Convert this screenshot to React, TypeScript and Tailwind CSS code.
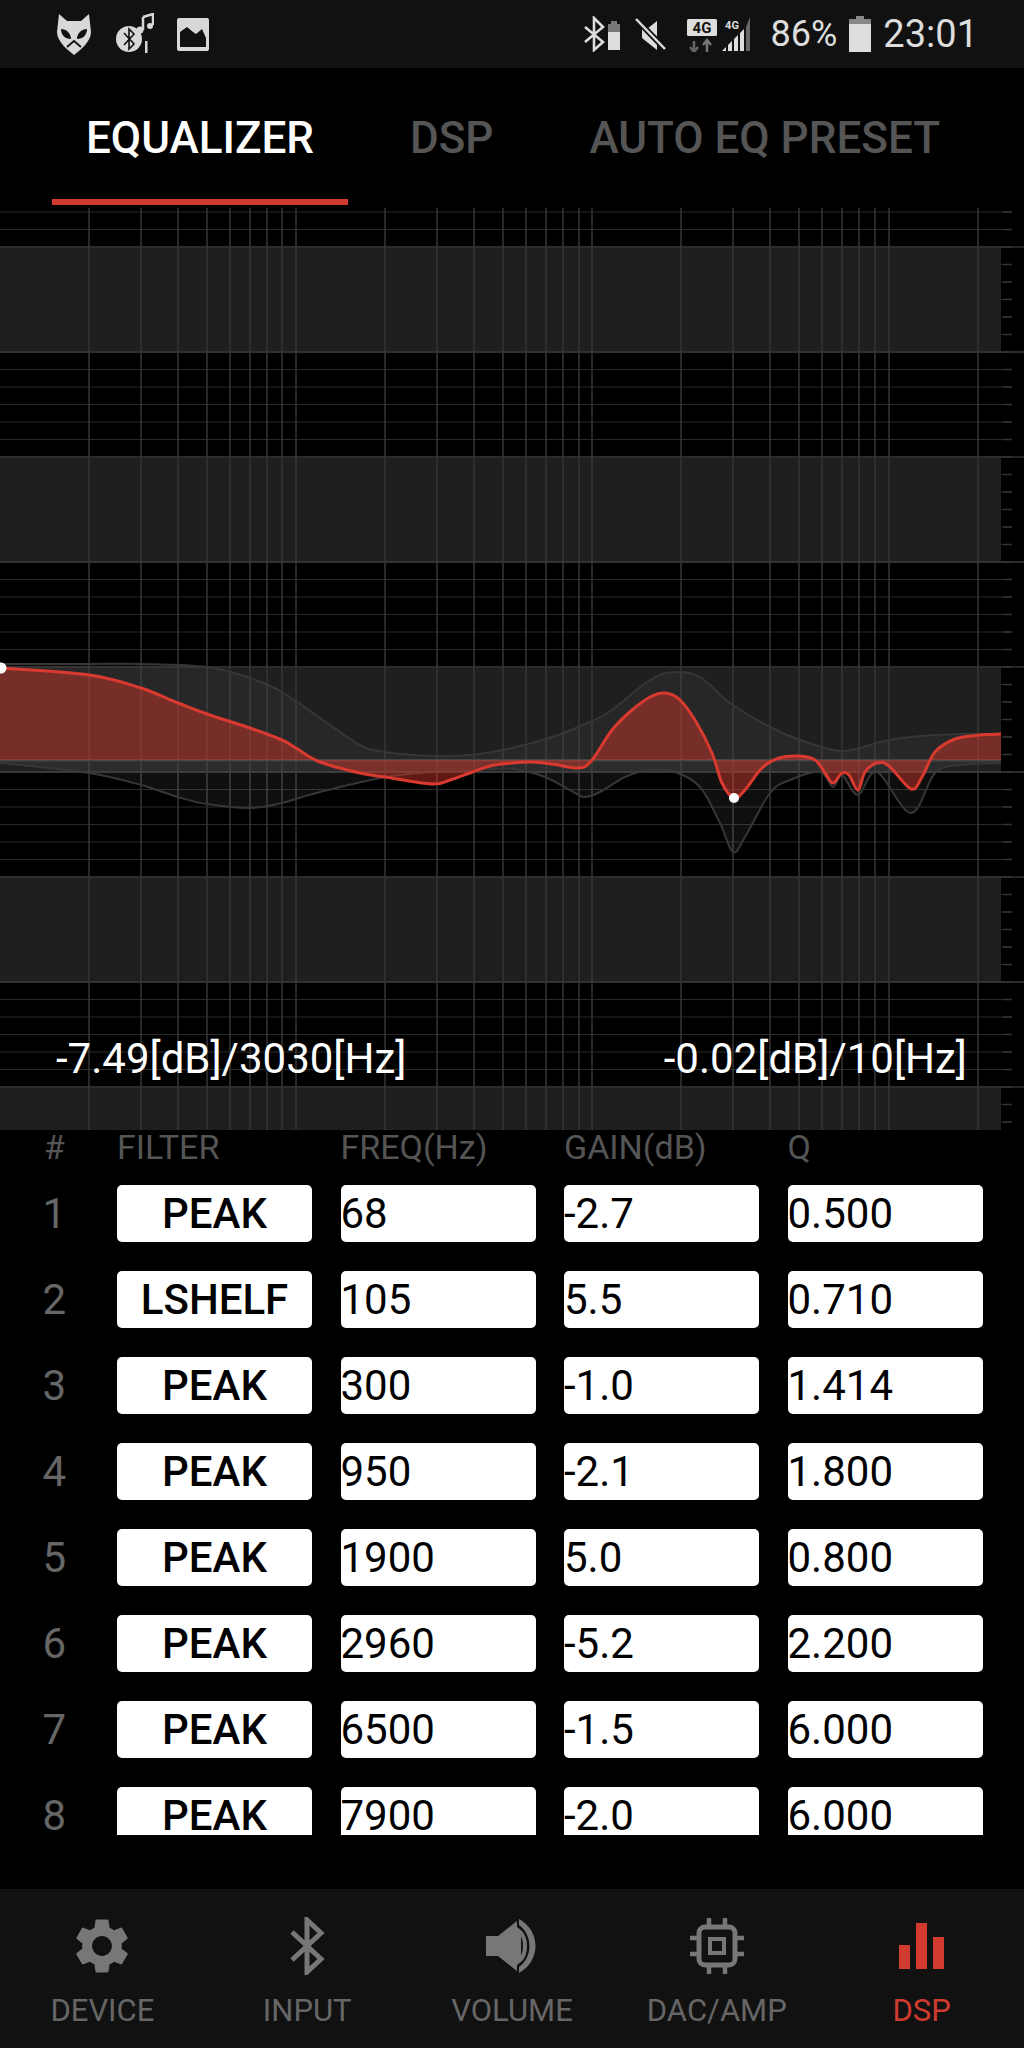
import { MdSettings } from "react-icons/md";

// curve points read off the reference, in page coordinates minus the chart's top (205)
const RED: number[][] = [
  [0, 668], [89, 675], [141, 688], [178, 703], [207, 714], [250, 728], [282, 740], [296, 748], [320, 762], [360, 773],
  [385, 777], [432, 784], [450, 780], [470, 773], [490, 766], [512, 763], [532, 762], [552, 764], [579, 768], [592, 760],
  [612, 730], [632, 710], [652, 696], [665, 693], [679, 699], [695, 720], [712, 753], [722, 783], [734, 798], [745, 790],
  [762, 768], [779, 758], [799, 756], [815, 760], [825, 773], [833, 783], [842, 773], [849, 775], [858, 790], [865, 772],
  [877, 763], [889, 766], [911, 789], [922, 777], [935, 752], [955, 739], [979, 735], [1001, 734],
];
const UPPER: number[][] = [
  [0, 664], [89, 664], [141, 664], [207, 667], [250, 678], [282, 692], [320, 718], [360, 745], [385, 752], [432, 756],
  [470, 755], [512, 748], [552, 737], [590, 722], [612, 710], [650, 680], [675, 672], [700, 677], [730, 703], [770, 727],
  [800, 740], [842, 751], [880, 742], [910, 737], [960, 734], [1001, 734],
];
const LOWER: number[][] = [
  [0, 763], [89, 773], [141, 785], [178, 797], [207, 804], [250, 808], [282, 803], [320, 792], [385, 777], [432, 772],
  [470, 770], [512, 769], [545, 777], [575, 793], [585, 797], [600, 792], [625, 777], [650, 770], [675, 772], [700, 787],
  [720, 823], [733, 852], [745, 837], [770, 793], [790, 780], [820, 772], [833, 787], [842, 775], [858, 795], [877, 772],
  [911, 813], [935, 773], [960, 765], [1001, 763],
];

const V_LINES = [
  89, 141, 178, 207, 230, 250, 267, 282, 296, 385, 437, 474, 503, 526, 546, 563, 579, 592, 681, 733, 770, 799, 822, 842,
  859, 875, 889, 978,
];

const TOP = 205;
const BASE = 760;
const BANDS = [247, 457, 667, 877, 1087];

function smooth(points: number[][]) {
  const p = points.map(([x, y]) => [x, y - TOP]);
  let d = `M${p[0][0]},${p[0][1]}`;
  for (let i = 0; i < p.length - 1; i++) {
    const a = p[Math.max(i - 1, 0)];
    const b = p[i];
    const c = p[i + 1];
    const e = p[Math.min(i + 2, p.length - 1)];
    const c1 = [b[0] + (c[0] - a[0]) / 6, b[1] + (c[1] - a[1]) / 6];
    const c2 = [c[0] - (e[0] - b[0]) / 6, c[1] - (e[1] - b[1]) / 6];
    d += ` C${c1[0].toFixed(1)},${c1[1].toFixed(1)} ${c2[0].toFixed(1)},${c2[1].toFixed(1)} ${c[0]},${c[1]}`;
  }
  return d;
}

function area(points: number[][]) {
  const base = BASE - TOP;
  return `${smooth(points)} L1001,${base} L0,${base} Z`;
}

function EqChart() {
  const hLines: number[] = [];
  for (let y = 212; y < 1130; y += 17.5) hLines.push(y - TOP);

  return (
    <svg width="1024" height="925" viewBox="0 0 1024 925" className="block">
      {hLines.map((y) => (
        <line key={y} x1="0" x2="1012" y1={y} y2={y} stroke="#2a2a2a" strokeWidth="1" />
      ))}
      {BANDS.map((y) => (
        <g key={y}>
          <rect x="0" y={y - TOP} width="1001" height={Math.min(105, 1130 - y)} fill="#1f1f1f" />
          <line x1="0" x2="1024" y1={y - TOP} y2={y - TOP} stroke="#333" strokeWidth="1.5" />
          {y + 105 < 1130 && <line x1="0" x2="1024" y1={y + 105 - TOP} y2={y + 105 - TOP} stroke="#3a3a3a" strokeWidth="1.5" />}
        </g>
      ))}
      {hLines.map((y) => (
        <line key={`t${y}`} x1="1003" x2="1012" y1={y} y2={y} stroke="#333" strokeWidth="1.5" />
      ))}
      {V_LINES.map((x) => (
        <line key={x} x1={x} x2={x} y1="3" y2="925" stroke="#363636" strokeWidth="1.5" />
      ))}

      <path d={area(UPPER)} fill="#ffffff" fillOpacity="0.04" />
      <path d={area(LOWER)} fill="#ffffff" fillOpacity="0.06" />
      <path d={smooth(UPPER)} fill="none" stroke="#363636" strokeWidth="2" />
      <path d={smooth(LOWER)} fill="none" stroke="#363636" strokeWidth="2" />
      <rect x="0" y={BASE - TOP - 1} width="1001" height="2.5" fill="#4a4444" />
      <rect x="0" y={BASE - TOP + 11} width="1001" height="1.5" fill="#3c3c3c" />
      <path d={area(RED)} fill="#d9382c" fillOpacity="0.45" />
      <path d={smooth(RED)} fill="none" stroke="#d93a30" strokeWidth="3" />
      <circle cx="1" cy={668 - TOP} r="5.5" fill="#fff" />
      <circle cx="734" cy={798 - TOP} r="5" fill="#fff" />
    </svg>
  );
}

function FoxIcon() {
  return (
    <svg width="36" height="44" viewBox="0 0 36 44">
      <path d="M3 2 L11 9 H25 L33 2 L35 20 C35 30 24 38 18 43 C12 38 1 30 1 20 Z" fill="#d8d8d8" />
      <path d="M5 17 C10 17 15 21 15 27 C9 27 5 23 5 17 Z M31 17 C26 17 21 21 21 27 C27 27 31 23 31 17 Z" fill="#111" />
      <path d="M11 35 L18 29 L25 35" fill="none" stroke="#111" strokeWidth="1.8" />
    </svg>
  );
}

function BtNoteIcon() {
  return (
    <svg width="38" height="42" viewBox="0 0 38 42">
      <circle cx="13" cy="26" r="13" fill="#d8d8d8" />
      <path d="M8 20 L18 31 L13 36 V16 L18 21 L8 32" fill="none" stroke="#111" strokeWidth="1.6" />
      <path d="M27 4 L37 1 V12 M27 4 V17" fill="none" stroke="#d8d8d8" strokeWidth="2.5" />
      <circle cx="24" cy="17" r="3.5" fill="#d8d8d8" />
      <circle cx="34" cy="13" r="3" fill="#d8d8d8" />
      <rect x="29" y="28" width="2.5" height="12" fill="#d8d8d8" />
    </svg>
  );
}

function PictureIcon() {
  return (
    <svg width="32" height="33" viewBox="0 0 32 33">
      <rect width="32" height="33" rx="2" fill="#d8d8d8" />
      <path d="M3 29 V14 L10 9 L16 14 L19 16 L25 11 L29 20 V29 Z" fill="#111" />
    </svg>
  );
}

function StatusRight() {
  return (
    <svg width="186" height="36" viewBox="0 0 186 36" className="shrink-0">
      <path d="M2 11 L20 26 L11 34 V2 L20 11 L2 26" fill="none" stroke="#ddd" strokeWidth="2.6" />
      <rect x="25" y="8" width="12" height="8" fill="#777" />
      <rect x="28" y="5" width="6" height="3" fill="#777" />
      <rect x="25" y="16" width="12" height="18" fill="#ddd" />
      <path d="M59 13 H64 L74 5 V34 L59 22 Z" fill="#ddd" />
      <path d="M53 3 L82 33" stroke="#111" strokeWidth="6" />
      <path d="M53 3 L82 33" stroke="#ddd" strokeWidth="2.5" />
      <rect x="104" y="3" width="30" height="17" rx="1.5" fill="#ddd" />
      <text x="119" y="17" textAnchor="middle" fontFamily="Roboto" fontWeight="700" fontSize="15" fill="#111">4G</text>
      <path d="M111 36 V25 M107 31 L111 36 L115 31" fill="none" stroke="#666" strokeWidth="2.5" />
      <path d="M124 36 V24 M120 29 L124 24 L128 29" fill="none" stroke="#777" strokeWidth="2.5" />
      <text x="149" y="13" textAnchor="middle" fontFamily="Roboto" fontWeight="700" fontSize="11" fill="#ddd">4G</text>
      <path d="M139 35 L143 31 V35 Z M145 29 L149 25 V35 H145 Z M151 23 L155 19 V35 H151 Z M157 17 L161 13 V35 H157 Z" fill="#ddd" />
      <path d="M163 11 L167 1 V35 H163 Z" fill="#666" />
    </svg>
  );
}

function BatteryIcon() {
  return (
    <svg width="22" height="36" viewBox="0 0 22 36">
      <rect x="7" y="0" width="8" height="3" fill="#888" />
      <rect x="0" y="3" width="22" height="6" fill="#888" />
      <rect x="0" y="8" width="22" height="28" fill="#ddd" />
    </svg>
  );
}

function BluetoothNav() {
  return (
    <svg width="36" height="58" viewBox="0 0 36 58">
      <path d="M3 15 L32 42 L18 55 V3 L32 16 L3 43" fill="none" stroke="#777" strokeWidth="5" />
    </svg>
  );
}

function VolumeNav() {
  return (
    <svg width="52" height="54" viewBox="0 0 52 54">
      <path d="M0 17 H12 L31 2 V52 L12 37 H0 Z" fill="#777" />
      <path d="M33 12 C41 18 41 36 33 42 Z" fill="#111" stroke="#777" strokeWidth="4" />
      <path d="M33 0 C55 12 55 42 33 54 L33 48 C47 38 47 16 33 6 Z" fill="#777" />
    </svg>
  );
}

function ChipNav() {
  return (
    <svg width="54" height="56" viewBox="0 0 54 56">
      <rect x="9" y="9" width="36" height="38" rx="6" fill="none" stroke="#777" strokeWidth="5" />
      <rect x="20" y="21" width="14" height="14" fill="none" stroke="#777" strokeWidth="4" />
      <path d="M19 0 V8 M35 0 V8 M19 48 V56 M35 48 V56 M0 20 H8 M0 36 H8 M46 20 H54 M46 36 H54" stroke="#777" strokeWidth="4.5" />
    </svg>
  );
}

function BarsNav() {
  return (
    <svg width="46" height="46" viewBox="0 0 46 46">
      <rect x="0" y="22" width="11" height="24" fill="#d13a2f" />
      <rect x="17" y="0" width="11" height="46" fill="#d13a2f" />
      <rect x="34" y="14" width="11" height="32" fill="#d13a2f" />
    </svg>
  );
}

const ROWS = [
  ["PEAK", "68", "-2.7", "0.500"],
  ["LSHELF", "105", "5.5", "0.710"],
  ["PEAK", "300", "-1.0", "1.414"],
  ["PEAK", "950", "-2.1", "1.800"],
  ["PEAK", "1900", "5.0", "0.800"],
  ["PEAK", "2960", "-5.2", "2.200"],
  ["PEAK", "6500", "-1.5", "6.000"],
  ["PEAK", "7900", "-2.0", "6.000"],
];

const GRID = "grid grid-cols-[88.5px_195px_195px_195px_195px] gap-x-[28.5px]";

export default function App() {
  return (
    <div className="w-[1024px] h-[2048px] bg-black overflow-hidden flex flex-col font-['Roboto',sans-serif]">
      <div className="h-[68px] bg-[#111111] flex items-center justify-between pl-[56px] pr-[46px] shrink-0">
        <div className="flex items-center">
          <FoxIcon />
          <div className="ml-[24px]"><BtNoteIcon /></div>
          <div className="ml-[23px]"><PictureIcon /></div>
        </div>
        <div className="flex items-center text-[#dddddd]">
          <StatusRight />
          <span className="text-[36px] leading-none ml-[2px]">86%</span>
          <div className="ml-[12px]"><BatteryIcon /></div>
          <span className="text-[38px] leading-none ml-[12px]">23:01</span>
        </div>
      </div>

      <div className="h-[137px] shrink-0 flex items-start text-[44px] leading-none font-medium pt-[48px] text-[#555555] relative">
        <div className="w-[296px] ml-[52px] text-center text-white">EQUALIZER</div>
        <div className="ml-[62px]">DSP</div>
        <div className="ml-[96px]">AUTO EQ PRESET</div>
        <div className="absolute left-[52px] top-[131px] w-[296px] h-[6px] bg-[#d13a2f]" />
      </div>

      <div className="relative h-[925px] shrink-0">
        <EqChart />
        <div className="absolute left-[56px] top-[833px] text-[42px] leading-none text-white">-7.49[dB]/3030[Hz]</div>
        <div className="absolute right-[57px] top-[833px] text-[42px] leading-none text-white">-0.02[dB]/10[Hz]</div>
      </div>

      <div className="h-[705px] shrink-0 overflow-hidden">
        <div className={`${GRID} h-[55px] text-[34px] leading-none text-[#555555] items-start pt-[-2px]`}>
          <div className="pl-[20px] text-center">#</div>
          <div>FILTER</div>
          <div>FREQ(Hz)</div>
          <div>GAIN(dB)</div>
          <div>Q</div>
        </div>
        <div className="flex flex-col gap-y-[29px]">
          {ROWS.map((r, i) => (
            <div key={i} className={`${GRID} h-[57px] text-[42px] leading-none items-center`}>
              <div className="pl-[20px] text-center text-[#666666]">{i + 1}</div>
              <div className="h-full bg-white rounded-[5px] text-black font-medium flex items-center justify-center">{r[0]}</div>
              {r.slice(1).map((v, j) => (
                <div key={j} className="h-full bg-white rounded-[5px] text-black flex items-center">{v}</div>
              ))}
            </div>
          ))}
        </div>
      </div>

      <div className="h-[54px] shrink-0" />

      <div className="h-[159px] shrink-0 bg-[#111111] grid grid-cols-5 text-[31px] leading-none text-[#666666]">
        {[
          { label: "DEVICE", icon: <MdSettings size={66} color="#777777" /> },
          { label: "INPUT", icon: <BluetoothNav /> },
          { label: "VOLUME", icon: <VolumeNav /> },
          { label: "DAC/AMP", icon: <ChipNav /> },
          { label: "DSP", icon: <BarsNav /> },
        ].map((t) => (
          <div key={t.label} className={`flex flex-col items-center ${t.label === "DSP" ? "text-[#d13a2f]" : ""}`}>
            <div className="h-[66px] mt-[24px] flex items-center justify-center">{t.icon}</div>
            <div className="mt-[16px]">{t.label}</div>
          </div>
        ))}
      </div>
    </div>
  );
}
